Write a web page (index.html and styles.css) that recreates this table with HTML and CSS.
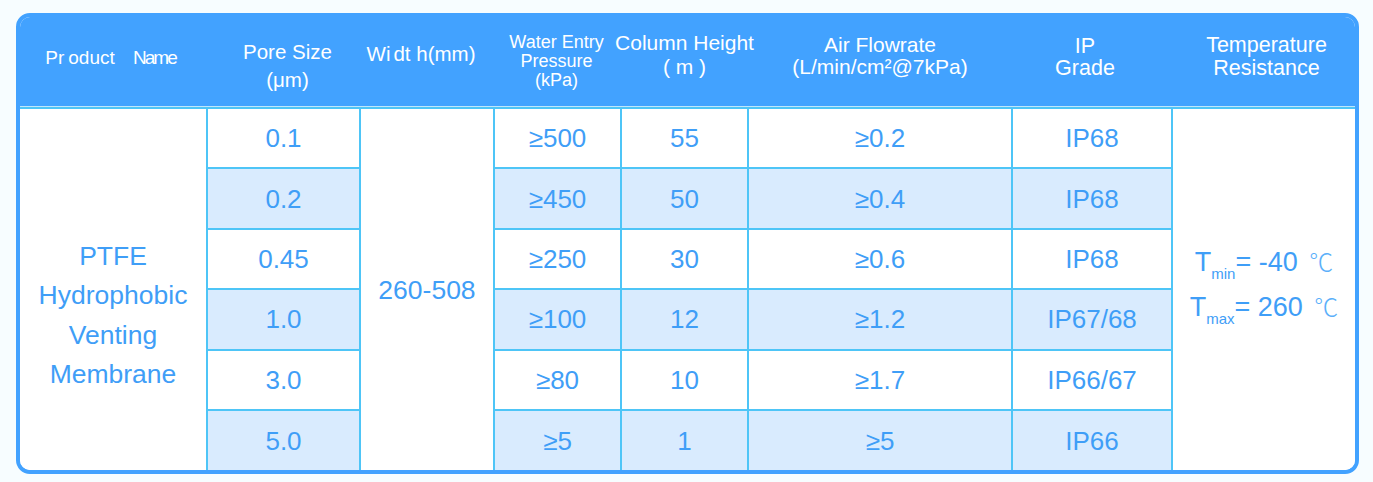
FILE: index.html
```html
<!DOCTYPE html>
<html lang="en">
<head>
<meta charset="utf-8">
<title>PTFE Hydrophobic Venting Membrane</title>
<link rel="stylesheet" href="styles.css">
</head>
<body>
<div class="spec">
  <table class="spec-table">
    <colgroup>
      <col class="c-name">
      <col class="c-pore">
      <col class="c-width">
      <col class="c-wep">
      <col class="c-col">
      <col class="c-air">
      <col class="c-ip">
      <col class="c-temp">
    </colgroup>
    <thead>
      <tr class="head-row">
        <th class="h-name">Pr<span class="nudge">oduct</span> <span class="name-word">Name</span></th>
        <th class="h-pore"><div>Pore Size</div><div>(μm)</div></th>
        <th class="h-width">W<span class="thin-i">i</span><span class="nudge-s">dt</span> h(mm)</th>
        <th class="h-wep"><div>Water Entry</div><div>Pressure</div><div>(kPa)</div></th>
        <th class="h-col"><div>Column Height</div><div>( m )</div></th>
        <th class="h-air"><div>Air Flowrate</div><div>(L/min/cm²@7kPa)</div></th>
        <th class="h-ip"><div>IP</div><div>Grade</div></th>
        <th class="h-temp"><div>Temperature</div><div>Resistance</div></th>
      </tr>
    </thead>
    <tbody>
      <tr>
        <td rowspan="6" class="cell-name">PTFE<br>Hydrophobic<br>Venting<br>Membrane</td>
        <td>0.1</td>
        <td rowspan="6" class="cell-width">260-508</td>
        <td>≥500</td>
        <td>55</td>
        <td>≥0.2</td>
        <td>IP68</td>
        <td rowspan="6" class="cell-temp">
          <div class="t-line">T<sub>min</sub>= -40 <span class="deg">℃</span></div>
          <div class="t-line">T<sub>max</sub>= 260 <span class="deg">℃</span></div>
        </td>
      </tr>
      <tr class="alt">
        <td>0.2</td>
        <td>≥450</td>
        <td>50</td>
        <td>≥0.4</td>
        <td>IP68</td>
      </tr>
      <tr>
        <td>0.45</td>
        <td>≥250</td>
        <td>30</td>
        <td>≥0.6</td>
        <td>IP68</td>
      </tr>
      <tr class="alt">
        <td>1.0</td>
        <td>≥100</td>
        <td>12</td>
        <td>≥1.2</td>
        <td>IP67/68</td>
      </tr>
      <tr>
        <td>3.0</td>
        <td>≥80</td>
        <td>10</td>
        <td>≥1.7</td>
        <td>IP66/67</td>
      </tr>
      <tr class="alt last">
        <td>5.0</td>
        <td>≥5</td>
        <td>1</td>
        <td>≥5</td>
        <td>IP66</td>
      </tr>
    </tbody>
  </table>
</div>
</body>
</html>
```
FILE: styles.css
```css
html, body {
  margin: 0;
  background: #f7fdff;
}

body {
  padding: 13px 0 0 16px;
  font-family: "Liberation Sans", Arial, sans-serif;
}

.spec {
  width: 1343px;
  box-sizing: border-box;
  border: 4px solid #42a2ff;
  border-radius: 14px;
  overflow: hidden;
  background: #ffffff;
}

.spec-table {
  width: 100%;
  border-collapse: collapse;
  table-layout: fixed;
}

.c-name { width: 187px; }
.c-pore { width: 153px; }
.c-width { width: 134px; }
.c-wep { width: 127px; }
.c-col { width: 127px; }
.c-air { width: 264px; }
.c-ip { width: 160px; }
.c-temp { width: 183px; }

.head-row {
  height: 91px;
}

.spec-table th {
  padding: 0;
  background: #42a2ff;
  color: #ffffff;
  font-weight: normal;
  text-align: center;
  vertical-align: top;
  white-space: nowrap;
  border-bottom: 2px solid #4ec5f7;
  box-shadow: inset 0 -1px 0 #bfe6fb;
  font-size: 21.5px;
  line-height: 22px;
}

.spec-table th div {
  margin: 0 -12px;
}

.spec-table th.h-name {
  font-size: 19px;
  line-height: 22px;
  padding-top: 30px;
  padding-right: 6px;
}

.nudge { margin-left: 4px; }

.name-word {
  margin-left: 13px;
  letter-spacing: -2px;
}

.spec-table th.h-pore {
  font-size: 20.5px;
  line-height: 28px;
  padding-top: 21px;
  padding-left: 8px;
}

.spec-table th.h-width {
  font-size: 20.5px;
  line-height: 24px;
  padding-top: 25px;
  padding-right: 12px;
}

.thin-i {
  letter-spacing: -1px;
}

.nudge-s { margin-left: 4px; }

.spec-table th.h-wep {
  font-size: 18px;
  line-height: 19px;
  padding-top: 16px;
  padding-right: 2px;
}

.spec-table th.h-col {
  font-size: 21px;
  line-height: 24px;
  padding-top: 14px;
}

.spec-table th.h-air {
  font-size: 21px;
  line-height: 22px;
  padding-top: 17px;
}

.spec-table th.h-ip {
  padding-top: 18px;
  padding-right: 14px;
}

.spec-table th.h-temp {
  padding-top: 17px;
  line-height: 23px;
  padding-left: 6px;
}

.spec-table tbody tr {
  height: 60.4px;
}

.spec-table td {
  padding: 0;
  border: 2px solid #4ec5f7;
  text-align: center;
  vertical-align: middle;
  color: #3f9ef7;
  font-size: 26px;
  line-height: 30px;
  background: #ffffff;
}

.spec-table tr.alt td {
  background: #d9ebfe;
}

.spec-table tr.last td {
  border-bottom: 0;
}

.spec-table td.cell-name {
  border-left: 0;
  border-bottom: 0;
  line-height: 39.5px;
  padding-top: 52px;
  font-size: 26.5px;
}

.spec-table td.cell-width {
  border-bottom: 0;
  font-size: 26.5px;
}

.spec-table td.cell-temp {
  border-right: 0;
  border-bottom: 0;
  padding-bottom: 12px;
}

.t-line {
  font-size: 27px;
  line-height: 43px;
  white-space: nowrap;
}

.t-line sub {
  font-size: 15px;
  vertical-align: -8px;
  line-height: 0;
}

.deg {
  font-family: "Noto Sans CJK SC", sans-serif;
  font-weight: 300;
  font-size: 24px;
  color: #5cb0fa;
  margin-left: 4px;
}
```
